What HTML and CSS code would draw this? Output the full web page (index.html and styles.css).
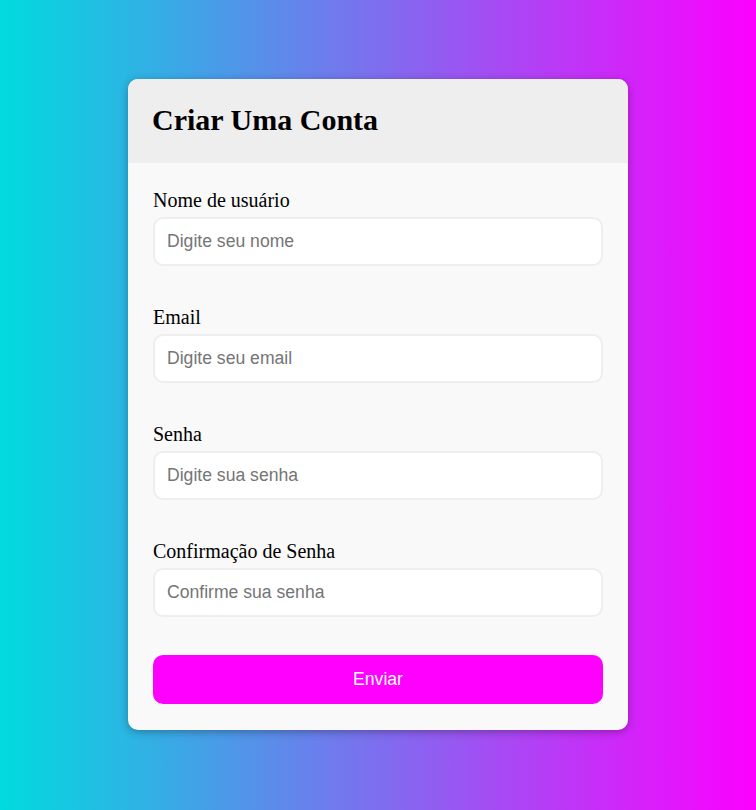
FILE: index.html
```html
<!DOCTYPE html>
<html lang="pt-BR">
<head>
<meta charset="UTF-8">
<title>Criar Uma Conta</title>
<link rel="stylesheet" href="styles.css">
</head>
<body>
<div class="card">
  <div class="card-header">
    <h1 class="title">Criar Uma Conta</h1>
  </div>
  <form class="card-body">
    <div class="field">
      <label class="label">Nome de usuário</label>
      <input class="input" type="text" placeholder="Digite seu nome">
    </div>
    <div class="field">
      <label class="label">Email</label>
      <input class="input" type="email" placeholder="Digite seu email">
    </div>
    <div class="field">
      <label class="label">Senha</label>
      <input class="input" type="password" placeholder="Digite sua senha">
    </div>
    <div class="field">
      <label class="label">Confirmação de Senha</label>
      <input class="input" type="password" placeholder="Confirme sua senha">
    </div>
    <button class="button" type="button">Enviar</button>
  </form>
</div>
</body>
</html>
```
FILE: styles.css
```css
html, body {
  margin: 0;
  padding: 0;
}
body {
  box-sizing: border-box;
  min-height: 100vh;
  padding-bottom: 1px;
  display: flex;
  align-items: center;
  justify-content: center;
  background: linear-gradient(to right, #00dbde, #fc00ff);
  font-family: "Liberation Serif", "Times New Roman", serif;
}
.card {
  width: 500px;
  background: #f9f9f9;
  border-radius: 10px;
  overflow: hidden;
  box-shadow: 0 2px 8px rgba(0, 0, 0, 0.3);
}
.card-header {
  background: #eeeeee;
  padding: 24px 24px 26px;
}
.title {
  margin: 0;
  font-size: 30px;
  line-height: 34px;
  font-weight: bold;
  color: #000;
}
.card-body {
  padding: 26px 25px 26px;
  display: flex;
  flex-direction: column;
}
.field {
  display: flex;
  flex-direction: column;
  gap: 5px;
  margin-bottom: 40px;
}
.field:last-of-type {
  margin-bottom: 38px;
}
.label {
  font-size: 20px;
  line-height: 23px;
  color: #000;
}
.input {
  box-sizing: border-box;
  width: 100%;
  height: 49px;
  margin: 0;
  padding: 0 12px;
  border: 2px solid #eeeeee;
  border-radius: 10px;
  background: #fff;
  font-family: "Liberation Sans", Arial, sans-serif;
  font-size: 17.6px;
  color: #000;
  outline: none;
}
.input::placeholder {
  color: #757575;
}
.button {
  height: 49px;
  border: none;
  border-radius: 10px;
  background: #ff00ff;
  color: #fff;
  font-family: "Liberation Sans", Arial, sans-serif;
  font-size: 17.6px;
  cursor: pointer;
}
```
